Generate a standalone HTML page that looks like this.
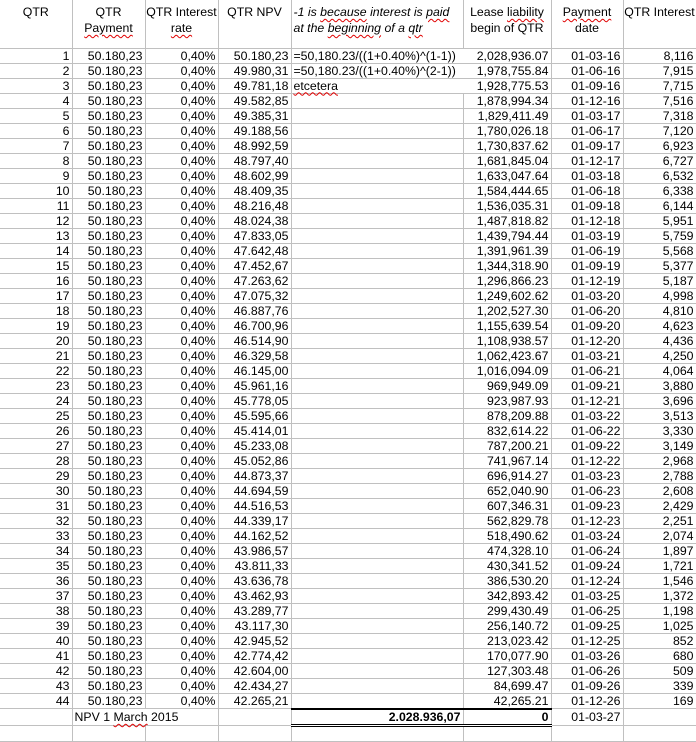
<!DOCTYPE html>
<html><head><meta charset="utf-8">
<style>
html,body{margin:0;padding:0;background:#fff;}
body{width:696px;height:736px;overflow:hidden;position:relative;font-family:"Liberation Sans",Arial,sans-serif;font-size:12.3px;color:#000;}
table{position:absolute;left:0;top:0;border-collapse:collapse;table-layout:fixed;width:696px;}
td{border-right:1px solid #c0c0c0;border-bottom:1px solid #c0c0c0;height:14px;padding:0 2px 0 0;line-height:14px;text-align:right;white-space:nowrap;overflow:visible;}
tr.h td{height:48px;vertical-align:top;text-align:center;padding:4px 0 0 0;line-height:16px;box-sizing:border-box;}
td.n{border-right:none;text-align:left;padding-left:2px;}
.w{text-decoration:underline wavy #e00000;text-decoration-thickness:1px;text-underline-offset:2px;}
i{font-style:italic;}
tr.t td.b{border-top:2px solid #000;border-bottom:3px double #000;font-weight:bold;}
</style></head><body>
<table>
<colgroup><col style="width:72px"><col style="width:73px"><col style="width:73px"><col style="width:73px"><col style="width:172px"><col style="width:88px"><col style="width:72px"><col style="width:73px"></colgroup>
<tr class="h"><td>QTR</td><td>QTR<br><span class="w">Payment</span></td><td>QTR Interest<br><span class="w">rate</span></td><td>QTR NPV</td><td style="text-align:left;padding-left:2px"><i>-1 is <span class="w">because</span> interest is <span class="w">paid</span><br>at the <span class="w">beginning</span> of a <span class="w">qtr</span></i></td><td>Lease <span class="w">liability</span><br>begin of QTR</td><td><span class="w">Payment</span><br>date</td><td>QTR Interest</td></tr>
<tr><td>1</td><td>50.180,23</td><td>0,40%</td><td>50.180,23</td><td class="n">=50,180.23/((1+0.40%)^(1-1))</td><td>2,028,936.07</td><td>01-03-16</td><td>8,116</td></tr>
<tr><td>2</td><td>50.180,23</td><td>0,40%</td><td>49.980,31</td><td class="n">=50,180.23/((1+0.40%)^(2-1))</td><td>1,978,755.84</td><td>01-06-16</td><td>7,915</td></tr>
<tr><td>3</td><td>50.180,23</td><td>0,40%</td><td>49.781,18</td><td class="n"><span class="w">etcetera</span></td><td>1,928,775.53</td><td>01-09-16</td><td>7,715</td></tr>
<tr><td>4</td><td>50.180,23</td><td>0,40%</td><td>49.582,85</td><td></td><td>1,878,994.34</td><td>01-12-16</td><td>7,516</td></tr>
<tr><td>5</td><td>50.180,23</td><td>0,40%</td><td>49.385,31</td><td></td><td>1,829,411.49</td><td>01-03-17</td><td>7,318</td></tr>
<tr><td>6</td><td>50.180,23</td><td>0,40%</td><td>49.188,56</td><td></td><td>1,780,026.18</td><td>01-06-17</td><td>7,120</td></tr>
<tr><td>7</td><td>50.180,23</td><td>0,40%</td><td>48.992,59</td><td></td><td>1,730,837.62</td><td>01-09-17</td><td>6,923</td></tr>
<tr><td>8</td><td>50.180,23</td><td>0,40%</td><td>48.797,40</td><td></td><td>1,681,845.04</td><td>01-12-17</td><td>6,727</td></tr>
<tr><td>9</td><td>50.180,23</td><td>0,40%</td><td>48.602,99</td><td></td><td>1,633,047.64</td><td>01-03-18</td><td>6,532</td></tr>
<tr><td>10</td><td>50.180,23</td><td>0,40%</td><td>48.409,35</td><td></td><td>1,584,444.65</td><td>01-06-18</td><td>6,338</td></tr>
<tr><td>11</td><td>50.180,23</td><td>0,40%</td><td>48.216,48</td><td></td><td>1,536,035.31</td><td>01-09-18</td><td>6,144</td></tr>
<tr><td>12</td><td>50.180,23</td><td>0,40%</td><td>48.024,38</td><td></td><td>1,487,818.82</td><td>01-12-18</td><td>5,951</td></tr>
<tr><td>13</td><td>50.180,23</td><td>0,40%</td><td>47.833,05</td><td></td><td>1,439,794.44</td><td>01-03-19</td><td>5,759</td></tr>
<tr><td>14</td><td>50.180,23</td><td>0,40%</td><td>47.642,48</td><td></td><td>1,391,961.39</td><td>01-06-19</td><td>5,568</td></tr>
<tr><td>15</td><td>50.180,23</td><td>0,40%</td><td>47.452,67</td><td></td><td>1,344,318.90</td><td>01-09-19</td><td>5,377</td></tr>
<tr><td>16</td><td>50.180,23</td><td>0,40%</td><td>47.263,62</td><td></td><td>1,296,866.23</td><td>01-12-19</td><td>5,187</td></tr>
<tr><td>17</td><td>50.180,23</td><td>0,40%</td><td>47.075,32</td><td></td><td>1,249,602.62</td><td>01-03-20</td><td>4,998</td></tr>
<tr><td>18</td><td>50.180,23</td><td>0,40%</td><td>46.887,76</td><td></td><td>1,202,527.30</td><td>01-06-20</td><td>4,810</td></tr>
<tr><td>19</td><td>50.180,23</td><td>0,40%</td><td>46.700,96</td><td></td><td>1,155,639.54</td><td>01-09-20</td><td>4,623</td></tr>
<tr><td>20</td><td>50.180,23</td><td>0,40%</td><td>46.514,90</td><td></td><td>1,108,938.57</td><td>01-12-20</td><td>4,436</td></tr>
<tr><td>21</td><td>50.180,23</td><td>0,40%</td><td>46.329,58</td><td></td><td>1,062,423.67</td><td>01-03-21</td><td>4,250</td></tr>
<tr><td>22</td><td>50.180,23</td><td>0,40%</td><td>46.145,00</td><td></td><td>1,016,094.09</td><td>01-06-21</td><td>4,064</td></tr>
<tr><td>23</td><td>50.180,23</td><td>0,40%</td><td>45.961,16</td><td></td><td>969,949.09</td><td>01-09-21</td><td>3,880</td></tr>
<tr><td>24</td><td>50.180,23</td><td>0,40%</td><td>45.778,05</td><td></td><td>923,987.93</td><td>01-12-21</td><td>3,696</td></tr>
<tr><td>25</td><td>50.180,23</td><td>0,40%</td><td>45.595,66</td><td></td><td>878,209.88</td><td>01-03-22</td><td>3,513</td></tr>
<tr><td>26</td><td>50.180,23</td><td>0,40%</td><td>45.414,01</td><td></td><td>832,614.22</td><td>01-06-22</td><td>3,330</td></tr>
<tr><td>27</td><td>50.180,23</td><td>0,40%</td><td>45.233,08</td><td></td><td>787,200.21</td><td>01-09-22</td><td>3,149</td></tr>
<tr><td>28</td><td>50.180,23</td><td>0,40%</td><td>45.052,86</td><td></td><td>741,967.14</td><td>01-12-22</td><td>2,968</td></tr>
<tr><td>29</td><td>50.180,23</td><td>0,40%</td><td>44.873,37</td><td></td><td>696,914.27</td><td>01-03-23</td><td>2,788</td></tr>
<tr><td>30</td><td>50.180,23</td><td>0,40%</td><td>44.694,59</td><td></td><td>652,040.90</td><td>01-06-23</td><td>2,608</td></tr>
<tr><td>31</td><td>50.180,23</td><td>0,40%</td><td>44.516,53</td><td></td><td>607,346.31</td><td>01-09-23</td><td>2,429</td></tr>
<tr><td>32</td><td>50.180,23</td><td>0,40%</td><td>44.339,17</td><td></td><td>562,829.78</td><td>01-12-23</td><td>2,251</td></tr>
<tr><td>33</td><td>50.180,23</td><td>0,40%</td><td>44.162,52</td><td></td><td>518,490.62</td><td>01-03-24</td><td>2,074</td></tr>
<tr><td>34</td><td>50.180,23</td><td>0,40%</td><td>43.986,57</td><td></td><td>474,328.10</td><td>01-06-24</td><td>1,897</td></tr>
<tr><td>35</td><td>50.180,23</td><td>0,40%</td><td>43.811,33</td><td></td><td>430,341.52</td><td>01-09-24</td><td>1,721</td></tr>
<tr><td>36</td><td>50.180,23</td><td>0,40%</td><td>43.636,78</td><td></td><td>386,530.20</td><td>01-12-24</td><td>1,546</td></tr>
<tr><td>37</td><td>50.180,23</td><td>0,40%</td><td>43.462,93</td><td></td><td>342,893.42</td><td>01-03-25</td><td>1,372</td></tr>
<tr><td>38</td><td>50.180,23</td><td>0,40%</td><td>43.289,77</td><td></td><td>299,430.49</td><td>01-06-25</td><td>1,198</td></tr>
<tr><td>39</td><td>50.180,23</td><td>0,40%</td><td>43.117,30</td><td></td><td>256,140.72</td><td>01-09-25</td><td>1,025</td></tr>
<tr><td>40</td><td>50.180,23</td><td>0,40%</td><td>42.945,52</td><td></td><td>213,023.42</td><td>01-12-25</td><td>852</td></tr>
<tr><td>41</td><td>50.180,23</td><td>0,40%</td><td>42.774,42</td><td></td><td>170,077.90</td><td>01-03-26</td><td>680</td></tr>
<tr><td>42</td><td>50.180,23</td><td>0,40%</td><td>42.604,00</td><td></td><td>127,303.48</td><td>01-06-26</td><td>509</td></tr>
<tr><td>43</td><td>50.180,23</td><td>0,40%</td><td>42.434,27</td><td></td><td>84,699.47</td><td>01-09-26</td><td>339</td></tr>
<tr><td>44</td><td>50.180,23</td><td>0,40%</td><td>42.265,21</td><td></td><td>42,265.21</td><td>01-12-26</td><td>169</td></tr>
<tr class="t"><td></td><td class="n">NPV 1 <span class="w">March</span> 2015</td><td></td><td></td><td class="b">2.028.936,07</td><td class="b">0</td><td>01-03-27</td><td></td></tr>
<tr><td></td><td></td><td></td><td></td><td></td><td></td><td></td><td></td></tr>
</table>
</body></html>
